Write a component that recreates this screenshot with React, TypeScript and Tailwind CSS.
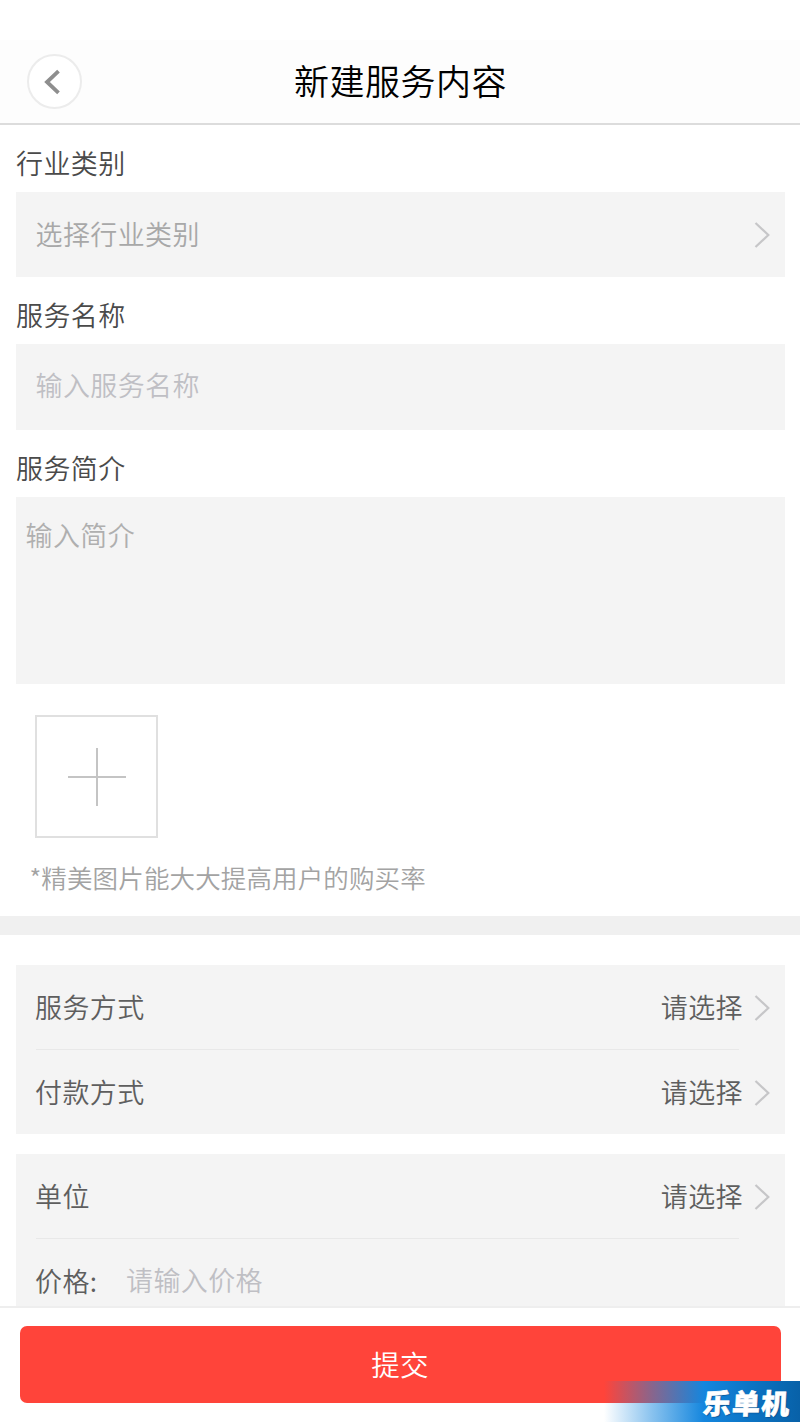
import type { ReactNode } from "react";

function Chevron() {
  return (
    <svg className="block h-[26px] w-[16px] shrink-0" viewBox="0 0 16 26" fill="none" stroke="#c6c6c8" strokeWidth="2.2">
      <path d="M1.5 1 14.3 13 1.5 25" />
    </svg>
  );
}

function Label({ children }: { children: ReactNode }) {
  return <div className="flex h-[67px] items-center pl-[0.5px] pt-[9px] text-[#4a4a4a]">{children}</div>;
}

function SelectRow({ label }: { label: string }) {
  return (
    <div className="flex h-[84px] items-center pl-[19.5px] pr-[15px] pt-px text-[#5e5e5e]">
      <span className="grow pb-px">{label}</span>
      <span className="mr-[10.5px] pb-px">请选择</span>
      <Chevron />
    </div>
  );
}

function Divider() {
  return <div className="ml-5 mr-[46px] h-px bg-[#e8e8e8]" />;
}

export default function App() {
  return (
    <div className="relative flex h-[1422px] w-[800px] flex-col overflow-hidden bg-white font-['Noto_Sans_CJK_SC',sans-serif] text-[27px] font-[350] leading-[40px] tracking-[0.4px]">
      <header className="mt-10 grid h-[85px] shrink-0 grid-cols-[110px_1fr_110px] items-center border-b-2 border-[#dcdcdc] bg-[#fdfdfd]">
        <button className="ml-[27px] flex size-[55px] items-center justify-center rounded-full border-2 border-[#ececec] bg-white">
          <svg className="mr-[6px] block h-[26px] w-[18px]" viewBox="0 0 18 26" fill="none" stroke="#8e8e8e" strokeWidth="3.8">
            <path d="M15.5 2.2 4 13l11.5 10.8" />
          </svg>
        </button>
        <h1 className="pb-1 pl-px text-center text-[35px] font-[350] tracking-[0.5px] text-black">新建服务内容</h1>
      </header>

      <main className="flex min-h-0 grow flex-col overflow-hidden">
        <section className="shrink-0 px-[15.5px]">
          <Label>行业类别</Label>
          <div className="flex h-[85px] items-center bg-[#f4f4f4] pl-[20px] pr-[15px] text-[#a8a8a8]">
            <span className="grow pb-[1px]">选择行业类别</span>
            <Chevron />
          </div>
          <Label>服务名称</Label>
          <div className="flex h-[86px] items-center bg-[#f4f4f4] pb-1 pl-[20px] text-[#bfbfc4]">输入服务名称</div>
          <Label>服务简介</Label>
          <div className="h-[187px] bg-[#f4f4f4] pl-[10px] pt-[18px] text-[#afafaf]">输入简介</div>
          <div className="ml-[19.5px] mt-[31px] flex size-[123px] items-center justify-center border-2 border-[#e0e0e0]">
            <svg className="block size-[58px]" viewBox="0 0 58 58" stroke="#c4c4c4" strokeWidth="2">
              <path d="M29 0v58M0 29h58" />
            </svg>
          </div>
          <p className="ml-[14px] mt-[19px] text-[25.5px] tracking-[0.13px] text-[#a3a3a3]">*精美图片能大大提高用户的购买率</p>
        </section>

        <div className="mt-[19px] h-[19px] shrink-0 bg-[#f0f0f0]" />

        <section className="shrink-0 px-[15.5px] pt-[30px]">
          <div className="bg-[#f4f4f4]">
            <SelectRow label="服务方式" />
            <Divider />
            <SelectRow label="付款方式" />
          </div>
          <div className="mt-5 bg-[#f4f4f4]">
            <SelectRow label="单位" />
            <Divider />
            <div className="flex h-[84px] items-center pl-[19.5px] text-[#5e5e5e]">
              <span className="w-[91px]">价格:</span>
              <span className="pb-[3px] text-[#bfbfc4]">请输入价格</span>
            </div>
          </div>
        </section>
      </main>

      <footer className="h-[116px] shrink-0 border-t-2 border-[#eeeeee] bg-white pl-5 pr-[19px] pt-[18px]">
        <button className="flex h-[77px] w-full items-center justify-center rounded-[7px] bg-[#ff443a] pb-px pr-px text-[28.5px] tracking-[0.3px] text-white">提交</button>
      </footer>

      <div className="absolute bottom-0 right-0 flex h-[41px] w-[200px] items-center justify-end bg-[linear-gradient(90deg,rgba(20,134,222,0)_2%,rgba(20,134,222,0.5)_26%,#1486de_52%,#0c74c4_75%,#0861a8_100%)] pr-[9px]">
        <span className="-skew-x-3 text-[28px] font-black tracking-[1.2px] text-white [-webkit-text-stroke:0.6px_white] [text-shadow:1px_1px_1px_#084f91]">乐单机</span>
      </div>
    </div>
  );
}
